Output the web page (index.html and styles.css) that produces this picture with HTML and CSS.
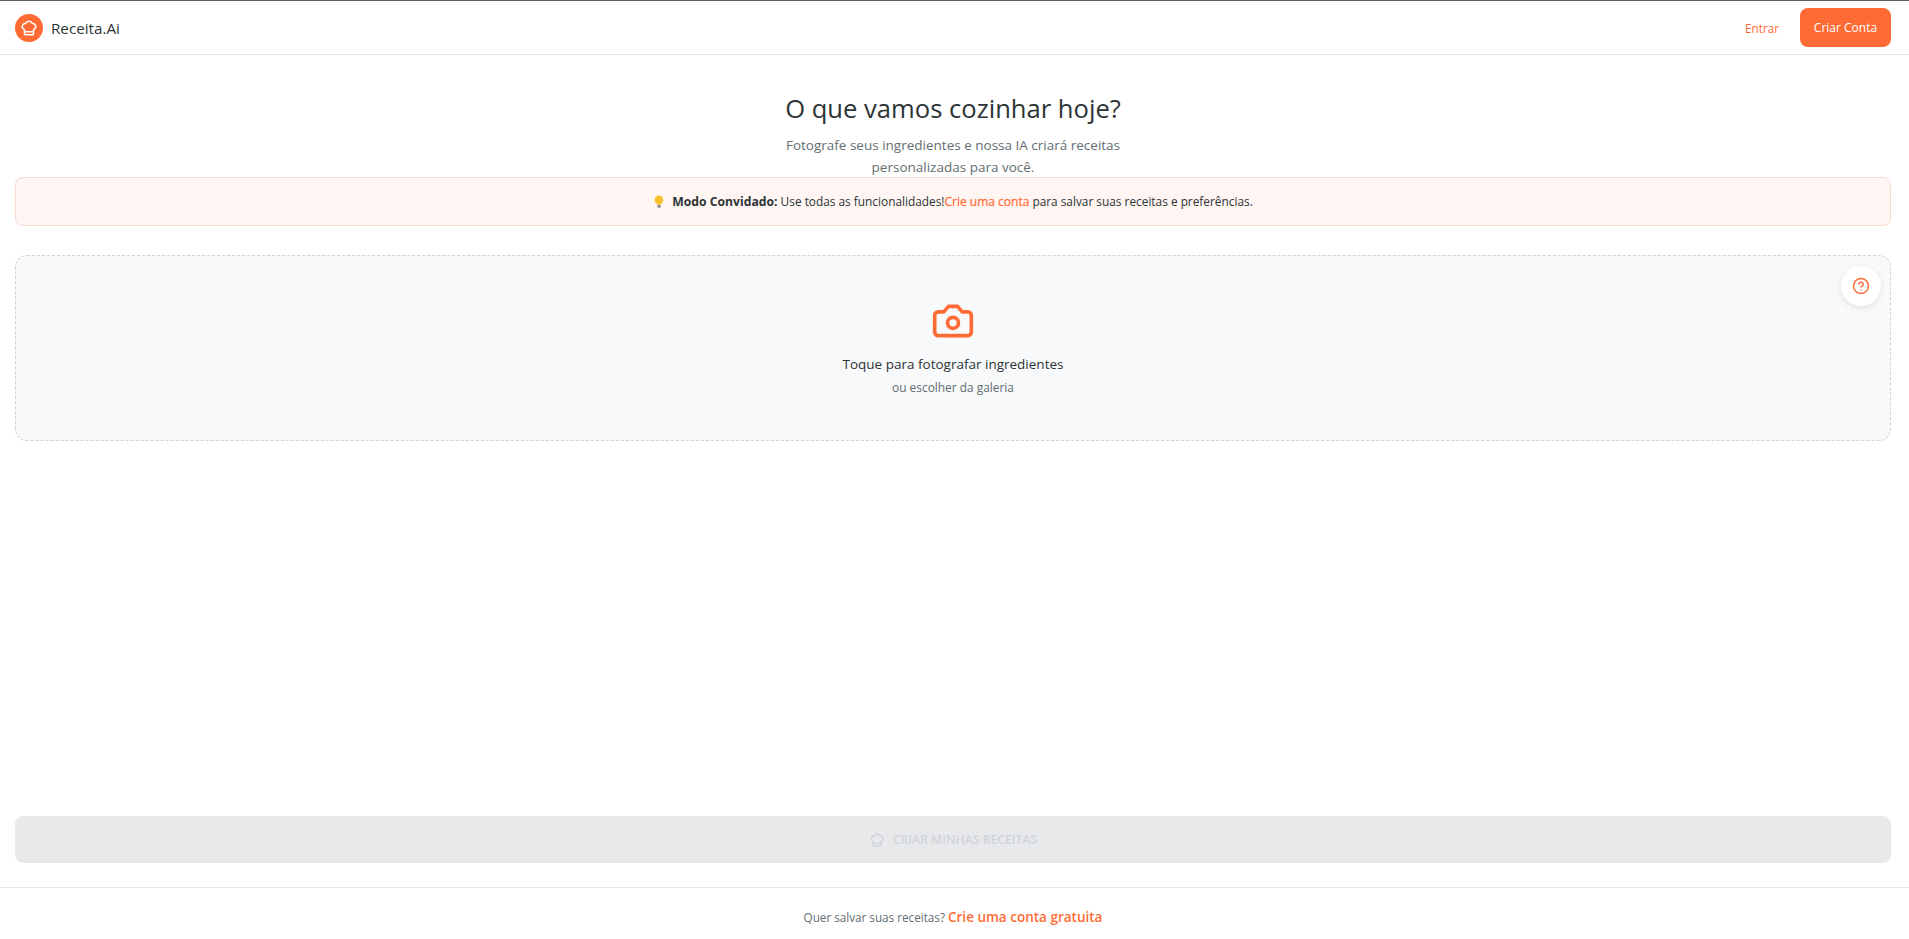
FILE: index.html
```html
<!DOCTYPE html>
<html lang="pt-BR">
<head>
<meta charset="utf-8">
<title>Receita.Ai</title>
<link rel="stylesheet" href="styles.css">
</head>
<body>
<div class="page">
  <header class="topbar">
    <div class="brand">
      <span class="brand-mark">
        <svg width="18" height="18" viewBox="0 0 24 24" fill="none" stroke="#fff" stroke-width="2" stroke-linecap="round" stroke-linejoin="round"><path d="M17 21a1 1 0 0 0 1-1v-5.35c0-.46.31-.85.74-1.03a4 4 0 0 0-2.13-7.58 5 5 0 0 0-9.22 0 4 4 0 0 0-2.13 7.58c.43.18.74.57.74 1.03V20a1 1 0 0 0 1 1Z"/><path d="M6 17h12"/></svg>
      </span>
      <span class="brand-name">Receita.Ai</span>
    </div>
    <nav class="auth">
      <a class="auth-login">Entrar</a>
      <a class="auth-signup">Criar Conta</a>
    </nav>
  </header>
  <main class="content">
    <section class="intro">
      <h1 class="intro-title">O que vamos cozinhar hoje?</h1>
      <p class="intro-text">Fotografe seus ingredientes e nossa IA criará receitas personalizadas para você.</p>
    </section>
    <div class="notice">
      <p class="notice-text">
        <svg class="notice-icon" width="12" height="14" viewBox="0 0 12 14"><path d="M6 .5a4.300 4.300 0 0 0-2.600 7.700c.5.4.7.9.8 1.500h3.600c.1-.6.3-1.100.8-1.500A4.300 4.300 0 0 0 6 .5Z" fill="#fbc02d"/><rect x="4.300" y="10" width="3.400" height="2.800" rx=".8" fill="#8d8d8d"/></svg>
        <strong class="notice-strong">Modo Convidado:</strong> Use todas as funcionalidades!<a class="notice-link">Crie uma conta</a> para salvar suas receitas e preferências.
      </p>
    </div>
    <section class="dropzone">
      <button class="help" type="button" aria-label="Ajuda">
        <svg width="18" height="18" viewBox="0 0 24 24" fill="none" stroke="#ff6b35" stroke-width="2" stroke-linecap="round" stroke-linejoin="round"><circle cx="12" cy="12" r="10"/><path d="M9.090 9a3 3 0 0 1 5.830 1c0 2-3 3-3 3"/><path d="M12 17h.01"/></svg>
      </button>
      <svg class="camera" width="44" height="44" viewBox="0 0 24 24" fill="none" stroke="#ff6b35" stroke-width="2" stroke-linecap="round" stroke-linejoin="round"><path d="M14.500 4h-5L7 7H4a2 2 0 0 0-2 2v9a2 2 0 0 0 2 2h16a2 2 0 0 0 2-2V9a2 2 0 0 0-2-2h-3l-2.500-3z"/><circle cx="12" cy="13" r="3"/></svg>
      <p class="drop-title">Toque para fotografar ingredientes</p>
      <p class="drop-sub">ou escolher da galeria</p>
    </section>
    <div class="spacer"></div>
    <button class="submit" type="button" disabled>
      <svg width="16" height="16" viewBox="0 0 24 24" fill="none" stroke="#d1d5db" stroke-width="2" stroke-linecap="round" stroke-linejoin="round"><path d="M17 21a1 1 0 0 0 1-1v-5.35c0-.46.31-.85.74-1.03a4 4 0 0 0-2.13-7.58 5 5 0 0 0-9.22 0 4 4 0 0 0-2.13 7.58c.43.18.74.57.74 1.03V20a1 1 0 0 0 1 1Z"/><path d="M6 17h12"/></svg>
      <span>CRIAR MINHAS RECEITAS</span>
    </button>
  </main>
  <footer class="footer">
    Quer salvar suas receitas? <a class="footer-link">Crie uma conta gratuita</a>
  </footer>
</div>
</body>
</html>
```
FILE: styles.css
```css
* { box-sizing: border-box; }
html, body { margin: 0; height: 100%; }
body {
  font-family: "Open Sans", "Noto Sans", "Liberation Sans", sans-serif;
  color: #2d3436;
  background: #fff;
}
.page {
  height: 939px;
  display: flex;
  flex-direction: column;
  border-top: 1px solid #5f5f5f;
  overflow: hidden;
}
.topbar {
  height: 54px;
  flex: none;
  display: flex;
  align-items: center;
  justify-content: space-between;
  padding: 0 18px 0 15px;
  border-bottom: 1px solid #e5e7eb;
}
.brand { display: flex; align-items: center; gap: 8px; }
.brand-mark {
  width: 28px;
  height: 28px;
  border-radius: 50%;
  background: #ff6b35;
  display: flex;
  align-items: center;
  justify-content: center;
}
.brand-name { font-size: 15.200px; }
.auth { display: flex; align-items: center; gap: 21px; }
.auth-login { font-size: 11.700px; color: #ff6b35; }
.auth-signup {
  width: 91px;
  height: 39px;
  border-radius: 8px;
  background: #ff6b35;
  color: #fff;
  font-size: 12px;
  display: flex;
  align-items: center;
  justify-content: center;
}
.content {
  flex: 1;
  display: flex;
  flex-direction: column;
  padding: 0 18px 0 15px;
}
.intro {
  height: 122px;
  flex: none;
  padding-top: 36px;
  display: flex;
  flex-direction: column;
  align-items: center;
  text-align: center;
}
.intro-title { margin: 0; font-size: 25.600px; font-weight: 400; line-height: 36px; }
.intro-text {
  margin: 7px 0 0;
  width: 345px;
  font-size: 13.500px;
  line-height: 22px;
  color: #636e72;
}
.notice {
  height: 49px;
  flex: none;
  display: flex;
  align-items: center;
  justify-content: center;
  background: #fff5f2;
  border: 1px solid #f8dcd2;
  border-radius: 8px;
}
.notice-text { margin: 0; font-size: 11.850px; line-height: 18px; }
.notice-icon { vertical-align: -3px; margin-right: 4px; }
.notice-strong { font-size: 12.200px; font-weight: 700; }
.notice-link { font-size: 12px; color: #ff6b35; -webkit-text-stroke: 0.2px #ff6b35; }
.dropzone {
  position: relative;
  height: 186px;
  flex: none;
  margin-top: 29px;
  display: flex;
  flex-direction: column;
  align-items: center;
  padding-top: 43px;
  background: #f8f9fa;
  border: 1px dashed #ced4da;
  border-radius: 12px;
}
.camera { display: block; }
.drop-title { margin: 11px 0 0; font-size: 13.500px; line-height: 20px; }
.drop-sub { margin: 4px 0 0; font-size: 11.900px; line-height: 18px; color: #636e72; }
.help {
  position: absolute;
  top: 10px;
  right: 9px;
  width: 40px;
  height: 40px;
  padding: 0;
  border: 0;
  border-radius: 50%;
  background: #fff;
  box-shadow: 0 2px 6px rgba(0,0,0,.1);
  display: flex;
  align-items: center;
  justify-content: center;
}
.spacer { flex: 1; }
.submit {
  height: 47px;
  flex: none;
  margin-bottom: 24px;
  border: 0;
  border-radius: 8px;
  background: #e8e9eb;
  color: #d1d5db;
  font-family: inherit;
  font-size: 12.200px;
  font-weight: 600;
  display: flex;
  align-items: center;
  justify-content: center;
  gap: 8px;
}
.footer {
  height: 52px;
  flex: none;
  border-top: 1px solid #e5e7eb;
  padding: 20px 3px 0 0;
  text-align: center;
  font-size: 11.700px;
  line-height: 18px;
  color: #636e72;
}
.footer-link { color: #ff6b35; font-weight: 600; font-size: 13.500px; }
```
